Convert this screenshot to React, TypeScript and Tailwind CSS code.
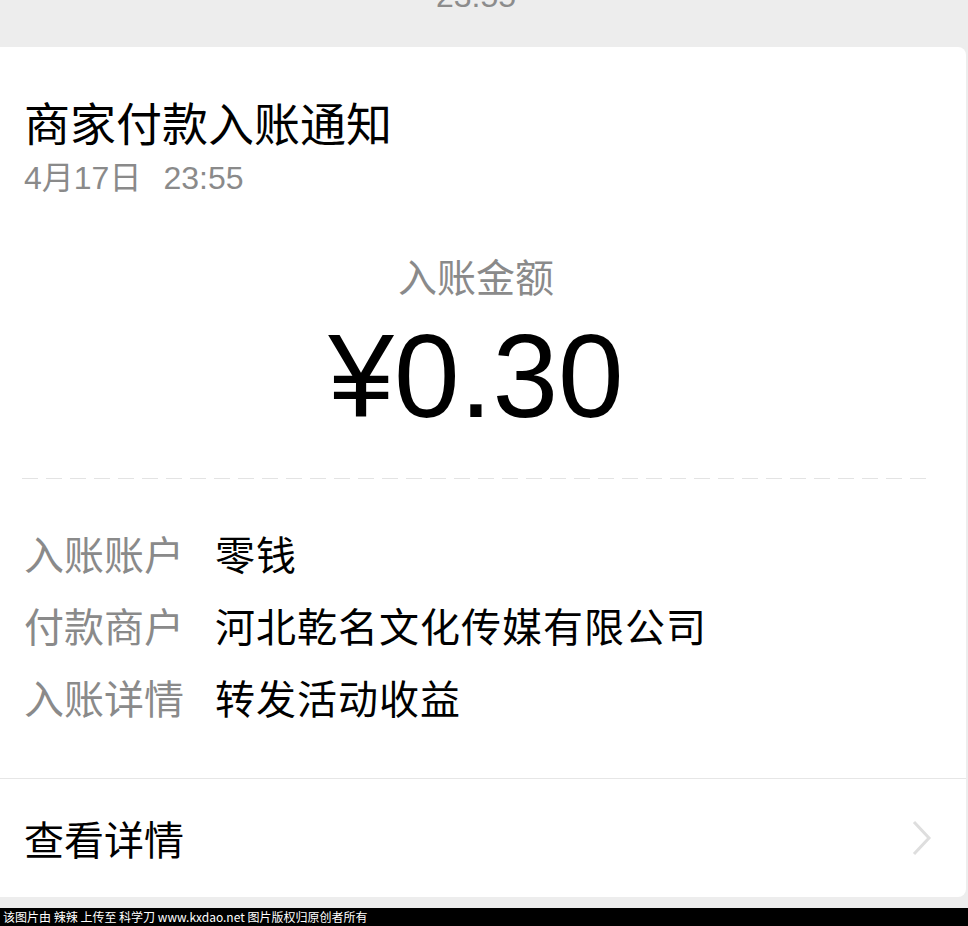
const cjk = '"Noto Sans CJK SC", "Liberation Sans", sans-serif';
const num = '"Liberation Sans", "Noto Sans CJK SC", sans-serif';

const rows = [
  { label: '入账账户', value: '零钱' },
  { label: '付款商户', value: '河北乾名文化传媒有限公司' },
  { label: '入账详情', value: '转发活动收益' },
];

export default function App() {
  return (
    <div
      className="w-[968px] h-[926px] bg-[#ededed] flex flex-col overflow-hidden"
      style={{ fontFamily: cjk }}
    >
      {/* previous message time, cut off at the top */}
      <div className="h-[47px] flex justify-center pr-[16px] overflow-hidden">
        <span className="text-[32px] leading-[36px] text-[#8c8c8c] -mt-[22px]" style={{ fontFamily: num }}>
          23:55
        </span>
      </div>

      <div className="flex-1 bg-white rounded-r-[8px] mr-[2px] flex flex-col">
        <div className="px-[24px] pt-[47px]">
          <h1 className="text-[46px] leading-[54px] text-black font-normal">商家付款入账通知</h1>
          <p className="text-[32px] leading-[38px] text-[#8a8a8a] mt-[11px]" style={{ fontFamily: num }}>
            4月17日<span className="inline-block w-[22px]" />23:55
          </p>
        </div>

        <div className="flex flex-col items-center pr-[14px] mt-[55px]">
          <p className="text-[39px] leading-[46px] text-[#8a8a8a]">入账金额</p>
          <p className="text-[118px] leading-[124px] text-black mt-[16px]" style={{ fontFamily: num }}>
            ¥0.30
          </p>
        </div>

        <div className="ml-[22px] mr-[34px] mt-[40px] h-px bg-[linear-gradient(to_right,#e3e3e3_16px,transparent_16px)] bg-[length:24px_1px]" />

        <div className="px-[24px] pt-[50px] flex flex-col gap-[24px]">
          {rows.map((r) => (
            <div key={r.label} className="flex items-center text-[40px] leading-[48px]">
              <span className="w-[191px] text-[#8a8a8a]">{r.label}</span>
              <span className="text-black tracking-[1px]">{r.value}</span>
            </div>
          ))}
        </div>

        <div className="mt-[57px] h-px bg-[#e6e6e6]" />

        <div className="flex-1 flex items-center justify-between pl-[24px] pr-[34px]">
          <span className="text-[40px] leading-[48px] text-black">查看详情</span>
          <svg width="20" height="36" viewBox="0 0 20 36" fill="none">
            <path d="M2 2 L17 18 L2 34" stroke="#dedede" strokeWidth="3" />
          </svg>
        </div>
      </div>

      <div className="h-[11px]" />
      <div className="h-[18px] bg-black flex items-center px-[3px]">
        <span className="text-[12px] leading-[18px] text-white whitespace-pre">
          该图片由 辣辣 上传至 科学刀 www.kxdao.net 图片版权归原创者所有
        </span>
      </div>
    </div>
  );
}
